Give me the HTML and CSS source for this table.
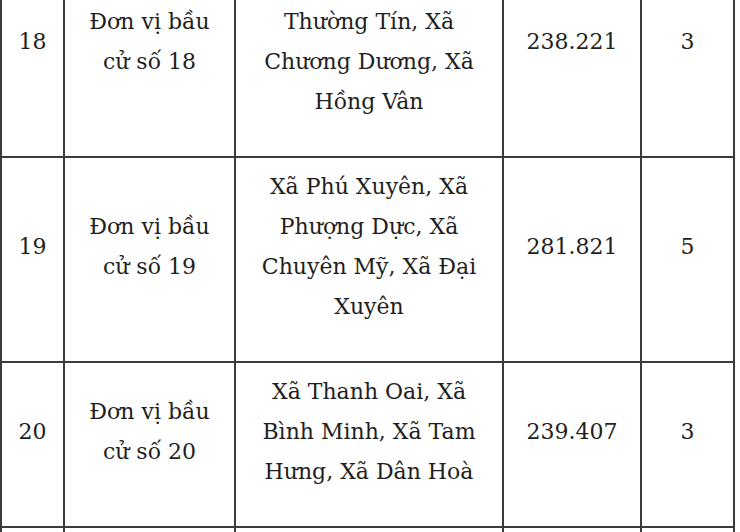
FILE: index.html
```html
<!DOCTYPE html>
<html lang="vi">
<head>
<meta charset="utf-8">
<title>Đơn vị bầu cử</title>
<link rel="stylesheet" href="styles.css">
</head>
<body>
<table class="units">
  <colgroup>
    <col class="c-no"><col class="c-name"><col class="c-area"><col class="c-pop"><col class="c-seats">
  </colgroup>
  <tbody>
    <tr>
      <td>18</td>
      <td>Đơn vị bầu cử số 18</td>
      <td>Xã Thượng Phúc, Xã Thường Tín, Xã Chương Dương, Xã Hồng Vân</td>
      <td>238.221</td>
      <td>3</td>
    </tr>
    <tr>
      <td>19</td>
      <td>Đơn vị bầu cử số 19</td>
      <td>Xã Phú Xuyên, Xã Phượng Dực, Xã Chuyên Mỹ, Xã Đại Xuyên</td>
      <td>281.821</td>
      <td>5</td>
    </tr>
    <tr>
      <td>20</td>
      <td>Đơn vị bầu cử số 20</td>
      <td>Xã Thanh Oai, Xã Bình Minh, Xã Tam Hưng, Xã Dân Hoà</td>
      <td>239.407</td>
      <td>3</td>
    </tr>
    <tr class="next">
      <td></td>
      <td></td>
      <td></td>
      <td></td>
      <td></td>
    </tr>
  </tbody>
</table>
</body>
</html>
```
FILE: styles.css
```css
html, body {
  margin: 0;
  padding: 0;
  background: #ffffff;
  overflow: hidden;
}
body {
  font-family: "DejaVu Serif", "Liberation Serif", serif;
  color: #1f1f1f;
}
.units {
  border-collapse: collapse;
  table-layout: fixed;
  width: 733px;
  margin-top: -49px;
  font-size: 22px;
  line-height: 40px;
}
.c-no { width: 63px; }
.c-name { width: 171px; }
.c-area { width: 268px; }
.c-pop { width: 138px; }
.c-seats { width: 93px; }
.units td {
  border: 2px solid #3b3b3b;
  text-align: center;
  vertical-align: middle;
  padding: 9px 12px 34px;
}
.units .next td {
  height: 40px;
}
```
